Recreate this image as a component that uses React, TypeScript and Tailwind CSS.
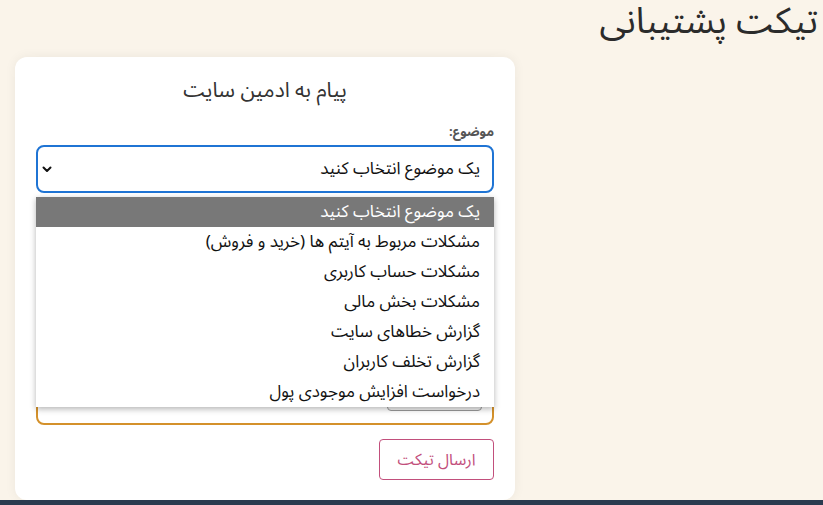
import { useState } from "react";

const topics: string[] = [
  "یک موضوع انتخاب کنید",
  "مشکلات مربوط به آیتم ها (خرید و فروش)",
  "مشکلات حساب کاربری",
  "مشکلات بخش مالی",
  "گزارش خطاهای سایت",
  "گزارش تخلف کاربران",
  "درخواست افزایش موجودی پول",
];

const ChevronDown = () => (
  <svg width="10" height="7" viewBox="0 0 10 7" className="shrink-0">
    <path d="M1.5 1.5 L5 5 L8.5 1.5" fill="none" stroke="#111" strokeWidth="2" strokeLinecap="round" strokeLinejoin="round" />
  </svg>
);

export default function App() {
  const [active, setActive] = useState(0);

  return (
    <div className="min-h-screen bg-[#faf4ea] font-['Noto_Sans_Arabic','Noto_Sans','DejaVu_Sans',sans-serif] text-[#222]">
      {/* Page title */}
      <div className="flex justify-end pr-[5px]">
        <h1 dir="rtl" className="text-[36px] leading-[44px] text-[#2b2b2b] font-normal">
          تیکت پشتیبانی
        </h1>
      </div>

      {/* Ticket card */}
      <div className="ml-[15px] mt-[13px] w-[500px] rounded-xl bg-white px-[21px] pt-[19px] pb-[20px] shadow-[0_0_12px_rgba(0,0,0,0.06)]" dir="rtl">
        <h2 className="text-center text-[21px] leading-[28px] text-[#333]">پیام به ادمین سایت</h2>

        <label className="mt-[19px] block text-[13px] font-bold leading-[18px] text-[#555]">موضوع:</label>

        <div className="relative mt-[4px]">
          <div className="flex h-[48px] items-center justify-between rounded-lg border-2 border-[#1f74d4] bg-white pr-[12px] pl-[4px]">
            <span className="text-[17px] leading-[24px] text-[#111]">{topics[0]}</span>
            <ChevronDown />
          </div>

          {/* Open option list */}
          <ul className="absolute top-[52px] right-0 left-0 z-10 bg-white shadow-[0_2px_6px_rgba(0,0,0,0.3)]">
            {topics.map((t, i) => (
              <li
                key={i}
                onMouseEnter={() => setActive(i)}
                className={
                  "flex h-[30px] items-center pr-[14px] text-[17px] leading-[24px] " +
                  (i === active ? "bg-[#787878] text-white" : "text-[#111]")
                }
              >
                {t}
              </li>
            ))}
          </ul>
        </div>

        {/* Message box, mostly under the open list */}
        <div className="mt-[12px] flex h-[220px] items-end rounded-lg border-2 border-[#d4912b] p-[10px] pb-[12px]">
          <div className="h-[30px] w-[95px] rounded border border-[#999] bg-[#f0f0f0]" />
        </div>

        <div className="mt-[14px] flex">
          <button className="h-[41px] w-[115px] rounded border border-[#c24f7c] text-[16px] leading-[24px] text-[#c24f7c]">
            ارسال تیکت
          </button>
        </div>
      </div>

      <footer className="h-[60px] bg-[#2a3b4f]" />
    </div>
  );
}
